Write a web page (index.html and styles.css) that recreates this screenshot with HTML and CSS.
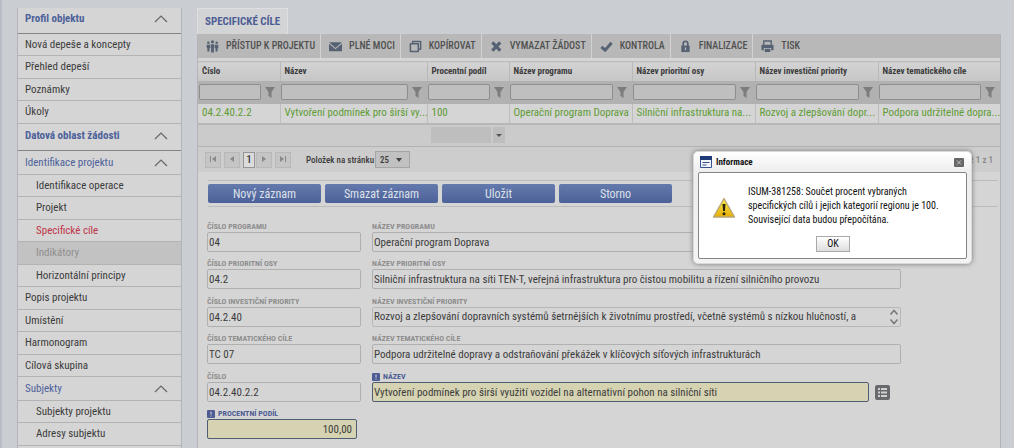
FILE: index.html
```html
<!DOCTYPE html>
<html lang="cs">
<head>
<meta charset="utf-8">
<title>Specifické cíle</title>
<link rel="stylesheet" href="styles.css">
</head>
<body>
<svg class="defs" width="0" height="0" aria-hidden="true">
  <symbol id="chevron" viewBox="0 0 14 8"><path d="M1 7 7 1l6 6" fill="none" stroke="#666" stroke-width="1.2"/></symbol>
  <symbol id="funnel" viewBox="0 0 10 11"><path d="M0 0h10L6.500 5v6L3.500 9V5z" fill="#7d7d7d"/></symbol>
  <symbol id="must" viewBox="0 0 8 8"><rect width="8" height="8" rx="1" fill="#4d5d93"/><path d="M3.500 1.500h1v3h-1zM3.500 5.500h1v1h-1z" fill="#dadbe4"/></symbol>
</svg>
<div class="page">
  <nav class="side">
    <button class="head strong" type="button">Profil objektu<svg class="chev"><use href="#chevron"/></svg></button>
    <ul>
      <li><a href="#">Nová depeše a koncepty</a></li>
      <li><a href="#">Přehled depeší</a></li>
      <li><a href="#">Poznámky</a></li>
      <li><a href="#">Úkoly</a></li>
    </ul>
    <button class="head strong" type="button">Datová oblast žádosti<svg class="chev"><use href="#chevron"/></svg></button>
    <button class="head sub" type="button">Identifikace projektu<svg class="chev"><use href="#chevron"/></svg></button>
    <ul>
      <li class="deep"><a href="#">Identifikace operace</a></li>
      <li class="deep"><a href="#">Projekt</a></li>
      <li class="deep current"><a href="#">Specifické cíle</a></li>
      <li class="deep off"><a href="#">Indikátory</a></li>
      <li class="deep"><a href="#">Horizontální principy</a></li>
      <li><a href="#">Popis projektu</a></li>
      <li><a href="#">Umístění</a></li>
      <li><a href="#">Harmonogram</a></li>
      <li><a href="#">Cílová skupina</a></li>
    </ul>
    <button class="head sub" type="button">Subjekty<svg class="chev"><use href="#chevron"/></svg></button>
    <ul>
      <li class="deep"><a href="#">Subjekty projektu</a></li>
      <li class="deep"><a href="#">Adresy subjektu</a></li>
      <li class="deep"><a href="#"></a></li>
    </ul>
  </nav>

  <main class="main">
    <h1 class="tab">SPECIFICKÉ CÍLE</h1>
    <div class="panel">
      <div class="toolbar">
        <button type="button"><svg viewBox="0 0 14 14"><g fill="#566273"><circle cx="7" cy="2" r="1.700"/><circle cx="2.500" cy="3" r="1.400"/><circle cx="11.500" cy="3" r="1.400"/><path d="M5 4.500h4V9H8.500v4.500h-3V9H5zM.7 5h3.600v4H3.700v3.500H1.500V9H.7zM9.700 5h3.600v4h-.8v3.500h-2.200V9h-.6z"/></g></svg>PŘÍSTUP K PROJEKTU</button>
        <button type="button"><svg viewBox="0 0 14 14"><path d="M0 2.500h14L7 8.500z" fill="#566273"/><path d="M0 4v8h14V4L7 10z" fill="#566273"/></svg>PLNÉ MOCI</button>
        <button type="button"><svg viewBox="0 0 14 14"><path d="M4 4V1.500h8.500V10H10M1.500 4H10v8.500H1.500z" fill="none" stroke="#566273" stroke-width="1.600" stroke-linejoin="round"/></svg>KOPÍROVAT</button>
        <button type="button"><svg viewBox="0 0 14 14"><path d="m2.500 2.500 8.500 9M11 2.500l-8.500 9" stroke="#566273" stroke-width="3.400"/></svg>VYMAZAT ŽÁDOST</button>
        <button type="button"><svg viewBox="0 0 14 14"><path d="m1.500 7.500 4 3.500 7-8" fill="none" stroke="#566273" stroke-width="3.200"/></svg>KONTROLA</button>
        <button type="button"><svg viewBox="0 0 14 14"><path d="M4.500 7V4a2.500 2.500 0 0 1 5 0v3" fill="none" stroke="#566273" stroke-width="1.800"/><path d="M2.500 6h9v7h-9z" fill="#566273"/><path d="M6.300 8h1.400v3H6.300z" fill="#b5b8bc"/></svg>FINALIZACE</button>
        <button type="button"><svg viewBox="0 0 14 14"><path d="M3 5V1h8v4" fill="none" stroke="#566273" stroke-width="1.500"/><path d="M.5 5h13v6H11V8.500H3V11H.5zM4 9.500h6V13H4z" fill="#566273"/></svg>TISK</button>
      </div>

      <table class="grid">
        <colgroup><col class="c-num"><col class="c-name"><col class="c-num"><col class="c-wide"><col class="c-wide"><col class="c-wide"><col></colgroup>
        <thead>
          <tr><th>Číslo</th><th>Název</th><th>Procentní podíl</th><th>Název programu</th><th>Název prioritní osy</th><th>Název investiční priority</th><th>Název tematického cíle</th></tr>
          <tr class="filters">
            <td><div><input aria-label="Filtr: Číslo"><svg><use href="#funnel"/></svg></div></td>
            <td><div><input aria-label="Filtr: Název"><svg><use href="#funnel"/></svg></div></td>
            <td><div><input aria-label="Filtr: Procentní podíl"><svg><use href="#funnel"/></svg></div></td>
            <td><div><input aria-label="Filtr: Název programu"><svg><use href="#funnel"/></svg></div></td>
            <td><div><input aria-label="Filtr: Název prioritní osy"><svg><use href="#funnel"/></svg></div></td>
            <td><div><input aria-label="Filtr: Název investiční priority"><svg><use href="#funnel"/></svg></div></td>
            <td><div><input aria-label="Filtr: Název tematického cíle"><svg><use href="#funnel"/></svg></div></td>
          </tr>
        </thead>
        <tbody>
          <tr class="data"><td>04.2.40.2.2</td><td>Vytvoření podmínek pro širší vy...</td><td>100</td><td>Operační program Doprava</td><td>Silniční infrastruktura na...</td><td>Rozvoj a zlepšování dopr...</td><td>Podpora udržitelné dopra...</td></tr>
        </tbody>
        <tfoot>
          <tr><td></td><td></td><td colspan="5"><div class="combo"><select aria-label="Souhrn"><option></option></select><svg viewBox="0 0 12 16"><path d="M3 7h6l-3 3z" fill="#555"/></svg></div></td></tr>
        </tfoot>
      </table>

      <div class="pager">
        <button type="button" aria-label="První"><svg viewBox="0 0 8 8"><path d="M1 1h1v6H1zM7 1v6L3 4z"/></svg></button>
        <button type="button" aria-label="Předchozí"><svg viewBox="0 0 8 8"><path d="M6 1v6L2 4z"/></svg></button>
        <button type="button" class="now">1</button>
        <button type="button" aria-label="Další"><svg viewBox="0 0 8 8"><path d="M2 1v6l4-3z"/></svg></button>
        <button type="button" class="last" aria-label="Poslední"><svg viewBox="0 0 8 8"><path d="M6 1h1v6H6zM1 1v6l4-3z"/></svg></button>
        <label for="size">Položek na stránku</label>
        <span class="size"><select id="size"><option>25</option></select><svg viewBox="0 0 8 8"><path d="M1 2h6L4 6z"/></svg></span>
        <span class="range">1 až 1 z 1</span>
      </div>

      <div class="actions">
        <button type="button">Nový záznam</button>
        <button type="button">Smazat záznam</button>
        <button type="button">Uložit</button>
        <button type="button">Storno</button>
      </div>

      <form class="form">
        <div class="row">
          <div class="field"><label for="f1">ČÍSLO PROGRAMU</label><input id="f1" value="04"></div>
          <div class="field"><label for="f2">NÁZEV PROGRAMU</label><input id="f2" value="Operační program Doprava"></div>
        </div>
        <div class="row">
          <div class="field"><label for="f3">ČÍSLO PRIORITNÍ OSY</label><input id="f3" value="04.2"></div>
          <div class="field"><label for="f4">NÁZEV PRIORITNÍ OSY</label><input id="f4" value="Silniční infrastruktura na síti TEN-T, veřejná infrastruktura pro čistou mobilitu a řízení silničního provozu"></div>
        </div>
        <div class="row">
          <div class="field"><label for="f5">ČÍSLO INVESTIČNÍ PRIORITY</label><input id="f5" value="04.2.40"></div>
          <div class="field"><label for="f6">NÁZEV INVESTIČNÍ PRIORITY</label><div class="scroller"><textarea id="f6" rows="1">Rozvoj a zlepšování dopravních systémů šetrnějších k životnímu prostředí, včetně systémů s nízkou hlučností, a</textarea><svg viewBox="0 0 12 18"><path d="m2.500 6.500 3.500-4 3.500 4M2.500 11.500l3.500 4 3.500-4" fill="none" stroke="#777" stroke-width="1.500"/></svg></div></div>
        </div>
        <div class="row">
          <div class="field"><label for="f7">ČÍSLO TEMATICKÉHO CÍLE</label><input id="f7" value="TC 07"></div>
          <div class="field"><label for="f8">NÁZEV TEMATICKÉHO CÍLE</label><input id="f8" value="Podpora udržitelné dopravy a odstraňování překážek v klíčových síťových infrastrukturách"></div>
        </div>
        <div class="row">
          <div class="field"><label for="f9">ČÍSLO</label><input id="f9" value="04.2.40.2.2"></div>
          <div class="field need"><label for="f10"><svg><use href="#must"/></svg>NÁZEV</label><div class="with-list"><input id="f10" value="Vytvoření podmínek pro širší využití vozidel na alternativní pohon na silniční síti"><button type="button" aria-label="Vybrat ze seznamu"><svg viewBox="0 0 15 15"><rect width="15" height="15" rx="2" fill="#68696d"/><path d="M3 3h2v2H3zM3 6.500h2v2H3zM3 10h2v2H3zM6 3h6v2H6zM6 6.500h6v2H6zM6 10h6v2H6z" fill="#d0d0d2"/></svg></button></div></div>
        </div>
        <div class="row">
          <div class="field need amount"><label for="f11"><svg><use href="#must"/></svg>PROCENTNÍ PODÍL</label><input id="f11" value="100,00"></div>
        </div>
      </form>
    </div>
  </main>
</div>

<section class="dialog" role="dialog" aria-labelledby="dlg">
  <header>
    <svg class="win" viewBox="0 0 12 12"><path d="M.5.5h11v11H.5z" fill="#f2f5fb" stroke="#35518f"/><path d="M0 0h12v4H0z" fill="#1d3976"/><path d="M2.500 6.500h7M2.500 9h4" stroke="#35518f"/></svg>
    <h2 id="dlg">Informace</h2>
    <button type="button" class="close" aria-label="Zavřít"><svg viewBox="0 0 10 9"><rect width="10" height="9" rx="1" fill="#666"/><path d="m3 2.500 4 4m0-4-4 4" stroke="#ccc"/></svg></button>
  </header>
  <div class="body">
    <div class="message">
      <svg viewBox="0 0 24 22"><defs><linearGradient id="warn" x1="0" y1="0" x2="0" y2="1"><stop offset="0" stop-color="#fbe94e"/><stop offset="1" stop-color="#e3ae08"/></linearGradient></defs><path d="M12 1.500 22.500 20h-21z" fill="url(#warn)" stroke="#b9a676" stroke-width="1.400" stroke-linejoin="round"/><path d="M10.500 7h3l-.6 7h-1.800z" fill="#2b2505"/><circle cx="12" cy="16.800" r="1.500" fill="#2b2505"/></svg>
      <p>ISUM-381258: Součet procent vybraných specifických cílů i jejich kategorií regionu je 100. Související data budou přepočítána.</p>
    </div>
    <button type="button" class="ok">OK</button>
  </div>
</section>
</body>
</html>
```
FILE: styles.css
```css
* { box-sizing: border-box; }
html { overflow: hidden; }
body {
  margin: 0;
  height: 100vh;
  overflow: hidden;
  background: #caced3;
  color: #3c3c3c;
  font: 11px/14px "Roboto Condensed", "Liberation Sans Narrow", Roboto, sans-serif;
}
button, input, select, textarea { font: inherit; color: inherit; margin: 0; padding: 0; border: 0; border-radius: 0; background: none; appearance: none; outline: 0; }
.defs { display: block; position: absolute; }
svg { flex: none; }
.page { display: flex; gap: 15px; min-height: 100vh; padding: 8px 13px 0 15px; border-left: 2px solid #b8bdc6; }

/* Navigation */
.side { flex: none; width: 165px; border: solid #b2b4b8; border-width: 0 1px; background: #d5d5d5; }
.side ul { margin: 0; padding: 0; list-style: none; }
.side li { height: 22px; padding: 4px 7px 3px; border-bottom: 1px solid #b3b3b3; }
.side li:nth-child(even) { height: 23px; }
.side a { color: #3c3c3c; text-decoration: none; }
.side .deep { padding-left: 18px; }
.side .current a { color: #c03449; }
.side .off { background: #c2c2c2; }
.side .off a { color: #8f8f8f; }
.head { display: flex; justify-content: space-between; align-items: center; width: 100%; height: 24px; padding: 0 13px 0 7px; border-bottom: 1px solid #b3b3b3; color: #4d619a; text-align: left; }
.strong { height: 27px; padding-bottom: 3px; border-bottom-color: #858585; font-weight: 700; }
.strong:first-child { height: 26px; padding-bottom: 4px; }
.chev { width: 14px; height: 8px; }

/* Record list */
.main { flex: 1; min-width: 0; display: flex; flex-direction: column; }
.tab { align-self: flex-start; margin: 0; height: 26px; padding: 6px 7px 5px; border: 1px solid #dddfe1; border-bottom: 0; background: #d3d4d6; color: #4d5d93; font-size: 11px; line-height: 14px; font-weight: 700; }
.panel { flex: 1; border: 1px solid #b3b5bd; border-width: 0 1px; background: #d5d5d5; }
.toolbar { display: flex; height: 24px; margin-bottom: 3px; background: #b8b8b8; }
.toolbar button { display: flex; align-items: center; gap: 7px; padding: 0 5px 0 8px; border-right: 1px solid #d3d3d3; color: #505050; font-size: 10px; font-weight: 500; white-space: nowrap; }
.toolbar button:last-child { border: 0; }
.toolbar svg { width: 13px; height: 13px; }
.grid { width: 100%; table-layout: fixed; border-collapse: collapse; }
.c-num { width: 82px; }
.c-name { width: 147px; }
.c-wide { width: 123px; }
.grid th, .grid td { padding: 0 0 0 4px; text-align: left; white-space: nowrap; }
.grid th { height: 19px; border-left: 1px solid #b9b9b9; border-top: 1px solid #bcbcbc; background: linear-gradient(#d3d3d3, #c6c6c6); font-size: 9px; line-height: 12px; font-weight: 700; }
.grid th:first-child, .grid .data td:first-child { border-left: 0; }
.grid .filters td { height: 23px; padding: 0 5px 0 1px; background: #b1b1b1; }
.filters div { display: flex; align-items: center; gap: 4px; }
.filters input { flex: 1; min-width: 0; height: 16px; border: 1px solid #8d8d8d; border-radius: 2px; background: #bfbfbf; }
.filters svg { width: 10px; height: 11px; }
.data td { height: 20px; border-left: 1px solid #bdbdbd; color: #5f9c35; }
.grid tfoot td { height: 23px; border-top: 2px solid #b7b7b7; border-bottom: 1px solid #b3b3b3; background: #cbcbcb; }
.combo { display: flex; gap: 2px; }
.combo select { width: 60px; height: 16px; background: #bebebe; }
.combo svg { width: 12px; height: 16px; background: #bebebe; }
.pager { display: flex; align-items: center; height: 25px; padding: 0 7px; background: #cdcdcd; font-size: 9px; font-weight: 500; }
.pager button { width: 16px; height: 16px; margin-right: 3px; border: 1px solid #b9b9b9; background: #c5c5c5; line-height: 14px; }
.pager .now { width: 12px; margin-right: 1px; border-color: #969696; background: #dcdcdc; font-size: 11px; }
.pager svg { width: 8px; height: 8px; fill: #888; }
.pager .last { margin-right: 15px; }
.pager label { margin-right: 1px; }
.size { display: flex; align-items: center; width: 35px; height: 17px; padding: 0 6px 0 4px; border: 1px solid #a5a5a5; background: #c1c1c1; }
.size select { flex: 1; }
.pager .size svg { fill: #444; }
.range { margin-left: auto; color: #858585; }
.actions { display: flex; gap: 4px; margin: 8px 2px 0 10px; padding: 3px 0; border: solid #bcbcbc; border-width: 1px 0; }
.actions button { flex: none; width: 113px; height: 19px; border-radius: 2px; background: linear-gradient(#647aad, #4c6199); color: #dee1e9; font-size: 12px; line-height: 18px; }

/* Detail form */
.form { padding: 14px 10px 0 9px; }
.row { display: grid; grid-template-columns: 154px minmax(0, 529px); column-gap: 11px; height: 37px; }
.row:nth-child(even) { height: 38px; }
.field { display: flex; flex-direction: column; }
.field label { display: flex; align-items: center; gap: 3px; height: 11px; color: #8e8e8e; font-size: 8px; line-height: 11px; font-weight: 700; }
.field label svg { width: 8px; height: 8px; }
.field input, .field textarea { display: block; width: 100%; height: 20px; padding: 0 1px; border: 1px solid #b0b0b0; border-radius: 2px; line-height: 18px; }
.field textarea { overflow: hidden; resize: none; white-space: nowrap; }
.scroller { display: flex; border: 1px solid #b7b7b7; border-radius: 2px; }
.field .scroller textarea { flex: 1; height: 18px; border: 0; }
.scroller svg { width: 12px; height: 18px; }
.need label { color: #4d5d93; }
.field.need input { border-color: #505e72; background: #d5d3b2; }
.with-list { display: flex; align-items: center; gap: 6px; padding-right: 11px; }
.with-list button, .with-list svg { display: block; width: 15px; height: 15px; flex: none; }
.amount { padding-right: 4px; }
.field.amount input { padding-right: 4px; text-align: right; }

/* Message window */
.dialog { position: absolute; top: 151px; right: 42px; width: 279px; padding: 0 4px 4px; border: 1px solid #d9d9d9; border-radius: 5px; background: linear-gradient(#fff, #ededed 20px, #f3f3f3); box-shadow: 0 0 5px #777; color: #111; }
.dialog header { display: flex; align-items: center; gap: 4px; height: 20px; padding: 0 3px 0 2px; }
.dialog h2 { flex: 1; margin: 0; font-size: 9px; line-height: 12px; font-weight: 700; }
.win { width: 12px; height: 12px; }
.close, .close svg { display: block; width: 10px; height: 9px; }
.dialog .body { padding: 12px 12px 6px 13px; border: 1px solid #858585; border-radius: 2px; background: #fff; }
.message { display: flex; align-items: center; gap: 12px; }
.message svg { width: 24px; height: 22px; margin-top: 3px; }
.message p { margin: 0; width: 195px; font-size: 10px; line-height: 14px; }
.ok { display: block; width: 34px; height: 16px; margin: 9px auto 0; border: 1px solid #aaa; background: linear-gradient(#fff, #ddd); font-size: 10px; line-height: 14px; }
```
